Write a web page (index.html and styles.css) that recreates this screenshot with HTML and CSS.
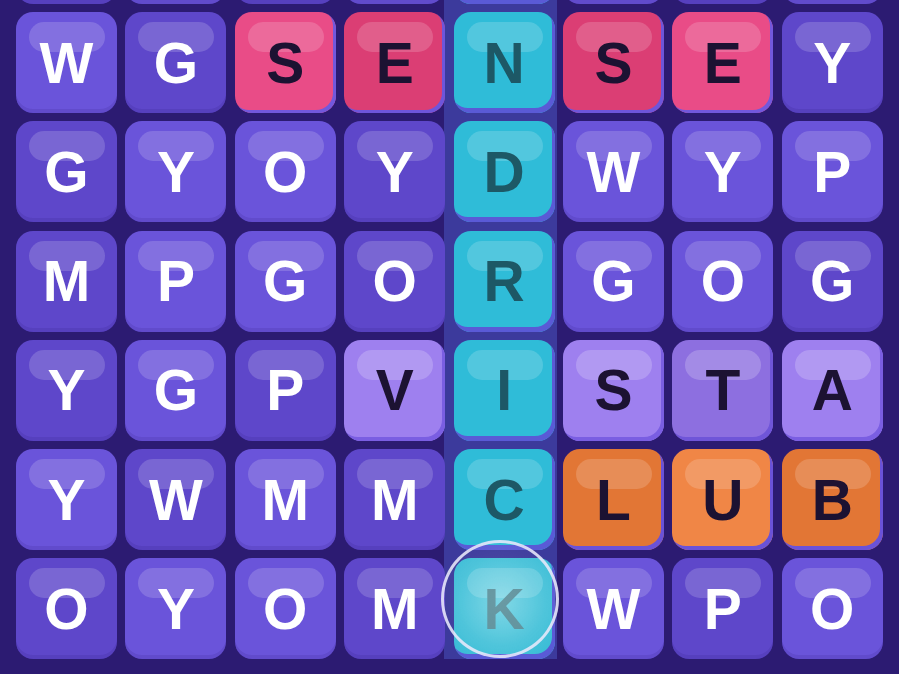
FILE: index.html
```html
<!DOCTYPE html>
<html lang="en">
<head>
<meta charset="utf-8">
<title>Word Grid</title>
<link rel="stylesheet" href="styles.css">
</head>
<body>
<div class="board">
  <div class="grid">
    <div class="col">
      <div class="tile dk"></div>
      <div class="tile"><span>W</span></div>
      <div class="tile dk"><span>G</span></div>
      <div class="tile dk"><span>M</span></div>
      <div class="tile dk"><span>Y</span></div>
      <div class="tile"><span>Y</span></div>
      <div class="tile dk"><span>O</span></div>
    </div>
    <div class="col">
      <div class="tile"></div>
      <div class="tile dk"><span>G</span></div>
      <div class="tile"><span>Y</span></div>
      <div class="tile"><span>P</span></div>
      <div class="tile"><span>G</span></div>
      <div class="tile dk"><span>W</span></div>
      <div class="tile"><span>Y</span></div>
    </div>
    <div class="col">
      <div class="tile dk"></div>
      <div class="tile pink"><span>S</span></div>
      <div class="tile"><span>O</span></div>
      <div class="tile"><span>G</span></div>
      <div class="tile dk"><span>P</span></div>
      <div class="tile"><span>M</span></div>
      <div class="tile"><span>O</span></div>
    </div>
    <div class="col">
      <div class="tile"></div>
      <div class="tile pink2"><span>E</span></div>
      <div class="tile dk"><span>Y</span></div>
      <div class="tile dk"><span>O</span></div>
      <div class="tile lav"><span>V</span></div>
      <div class="tile dk"><span>M</span></div>
      <div class="tile dk"><span>M</span></div>
    </div>
    <div class="col band">
      <div class="tile cyan"></div>
      <div class="tile cyan"><span>N</span></div>
      <div class="tile cyan"><span>D</span></div>
      <div class="tile cyan"><span>R</span></div>
      <div class="tile cyan"><span>I</span></div>
      <div class="tile cyan"><span>C</span></div>
      <div class="tile cyan active"><span>K</span></div>
    </div>
    <div class="col">
      <div class="tile"></div>
      <div class="tile pink2"><span>S</span></div>
      <div class="tile"><span>W</span></div>
      <div class="tile"><span>G</span></div>
      <div class="tile lav"><span>S</span></div>
      <div class="tile orange"><span>L</span></div>
      <div class="tile"><span>W</span></div>
    </div>
    <div class="col">
      <div class="tile dk"></div>
      <div class="tile pink"><span>E</span></div>
      <div class="tile"><span>Y</span></div>
      <div class="tile"><span>O</span></div>
      <div class="tile lav2"><span>T</span></div>
      <div class="tile orange2"><span>U</span></div>
      <div class="tile dk"><span>P</span></div>
    </div>
    <div class="col">
      <div class="tile"></div>
      <div class="tile dk"><span>Y</span></div>
      <div class="tile"><span>P</span></div>
      <div class="tile dk"><span>G</span></div>
      <div class="tile lav"><span>A</span></div>
      <div class="tile orange"><span>B</span></div>
      <div class="tile"><span>O</span></div>
    </div>
  </div>
</div>
</body>
</html>
```

FILE: styles.css
```css
html, body {
  margin: 0;
  padding: 0;
  background: #2c1b72;
}

.board {
  width: 899px;
  height: 674px;
  overflow: hidden;
  background: #2c1b72;
}

.grid {
  display: flex;
  gap: 8.4px;
  padding-left: 16px;
  margin-top: -97.3px;
  align-items: flex-start;
}

.col {
  display: flex;
  flex-direction: column;
  gap: 8.3px;
}

.band {
  background: #3c3a9c;
  margin-left: -10px;
  padding-left: 10px;
  margin-right: -2px;
  padding-right: 2px;
}

.tile {
  position: relative;
  width: 101px;
  height: 101px;
  border-radius: 17px;
  display: flex;
  align-items: center;
  justify-content: center;
  background: #6a54da;
  box-shadow: inset 0 -4px 0 rgba(40, 20, 120, 0.14);
  font-family: "Liberation Sans", Arial, sans-serif;
  font-weight: bold;
  font-size: 57px;
  color: #ffffff;
}

.tile::before {
  content: "";
  position: absolute;
  left: 13px;
  top: 10px;
  width: 76px;
  height: 30px;
  border-radius: 15px;
  background: rgba(255, 255, 255, 0.17);
}

.tile span {
  position: relative;
}

.tile.dk {
  background: #5e47ca;
}

.tile.pink {
  background: #e94c87;
  box-shadow: inset -3px -3px 0 #7258dc;
  color: #1c1232;
}

.tile.pink2 {
  background: #db3e74;
  box-shadow: inset -3px -3px 0 #6e55da;
  color: #1c1232;
}

.tile.lav {
  background: #9e80ef;
  box-shadow: inset -3px -4px 0 #7a5ee2;
  color: #1c1232;
}

.tile.lav2 {
  background: #8d6fe0;
  box-shadow: inset -3px -4px 0 #6f55d8;
  color: #1c1232;
}

.tile.lav::before, .tile.lav2::before {
  background: rgba(255, 255, 255, 0.2);
}

.tile.orange {
  background: #e27635;
  box-shadow: inset -3px -4px 0 #6a52d8;
  color: #1c1232;
}

.tile.orange2 {
  background: #f08646;
  box-shadow: inset -3px -4px 0 #6a52d8;
  color: #1c1232;
}

.tile.cyan {
  background: #2fbcd8;
  box-shadow: inset -3px -5px 0 #5a5ad6;
  color: #1d5866;
}

.tile.cyan::before {
  background: rgba(255, 255, 255, 0.17);
}

.tile.active {
  background: radial-gradient(circle at 48% 45%, #72d3e3 0%, #48c3da 55%, #34b9d4 100%);
  color: #5a8f9a;
}

.tile.active::after {
  content: "";
  position: absolute;
  left: -13px;
  top: -18px;
  width: 112px;
  height: 112px;
  border-radius: 50%;
  border: 3px solid rgba(232, 232, 250, 0.88);
  background: radial-gradient(circle, rgba(255, 255, 255, 0.1) 0%, rgba(255, 255, 255, 0.03) 70%);
}
```
